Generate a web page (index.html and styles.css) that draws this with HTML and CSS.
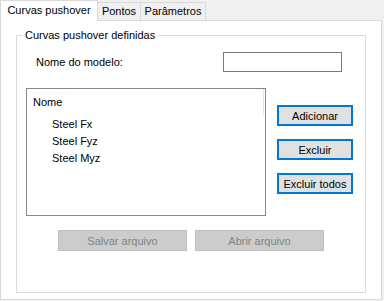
FILE: index.html
```html
<!DOCTYPE html>
<html lang="pt">
<head>
  <meta charset="UTF-8" />
  <title>Curvas pushover</title>
  <link rel="stylesheet" href="styles.css">
</head>
<body>
  <div class="tabs">
    <div class="tab active">Curvas pushover</div>
    <div class="tab tab-pontos">Pontos</div>
    <div class="tab tab-param">Parâmetros</div>
  </div>

  <div class="panel">
    <div class="group">
      <span class="group-title">Curvas pushover definidas</span>

      <div class="name-row">
        <label class="name-label" for="modelName">Nome do modelo:</label>
        <input class="name-input" id="modelName" type="text">
      </div>

      <div class="list-row">
        <div class="list">
          <div class="list-head">Nome</div>
          <ul class="items">
            <li>Steel Fx</li>
            <li>Steel Fyz</li>
            <li>Steel Myz</li>
          </ul>
        </div>
        <div class="side-buttons">
          <button class="btn">Adicionar</button>
          <button class="btn">Excluir</button>
          <button class="btn">Excluir todos</button>
        </div>
      </div>

      <div class="file-row">
        <button class="btn-file" disabled>Salvar arquivo</button>
        <button class="btn-file" disabled>Abrir arquivo</button>
      </div>
    </div>
  </div>
</body>
</html>
```

FILE: styles.css
```css
body {
  margin: 0;
  width: 384px;
  height: 301px;
  background: #f0f0f0;
  font-family: "Liberation Sans", Arial, sans-serif;
  font-size: 11px;
  color: #000;
}

/* abas */
.tabs {
  display: flex;
  align-items: flex-end;
  height: 20px;
}

.tab {
  box-sizing: border-box;
  height: 18px;
  line-height: 17px;
  text-align: center;
  border-top: 1px solid #d9d9d9;
  border-right: 1px solid #d9d9d9;
  background: #f0f0f0;
}

.tab.active {
  position: relative;
  z-index: 1;
  width: 98px;
  height: 21px;
  margin-bottom: -1px;
  line-height: 18px;
  border-left: 1px solid #d9d9d9;
  background: #fff;
}

.tab-pontos {
  width: 43px;
}

.tab-param {
  width: 65px;
}

.panel {
  box-sizing: border-box;
  width: 382px;
  height: 280px;
  padding: 14px 15px 0;
  background: #fff;
  border: 1px solid #d9d9d9;
}

/* grupo */
.group {
  position: relative;
  box-sizing: border-box;
  width: 350px;
  height: 258px;
  border: 1px solid #dcdcdc;
}

.group-title {
  position: absolute;
  top: -8px;
  left: 6px;
  padding: 0 2px;
  background: #fff;
  line-height: 14px;
}

.name-row {
  display: flex;
  align-items: center;
  margin-top: 16px;
  padding: 0 23px 0 19px;
}

.name-label {
  flex: 1;
}

.name-input {
  box-sizing: border-box;
  width: 119px;
  height: 20px;
  margin: 0;
  border: 1px solid #7a7a7a;
  background: #fff;
}

.list-row {
  display: flex;
  margin-top: 16px;
  padding-left: 9px;
}

.list {
  box-sizing: border-box;
  width: 240px;
  height: 128px;
  border: 1px solid #828790;
}

.list-head {
  height: 26px;
  line-height: 26px;
  padding-left: 6px;
  margin-right: 1px;
  border-right: 1px solid #e5e5e5;
}

.items {
  list-style: none;
  margin: 0;
  padding: 0 0 0 25px;
}

.items li {
  height: 17px;
  line-height: 18px;
}

.side-buttons {
  display: flex;
  flex-direction: column;
  gap: 13px;
  margin: 17px 0 0 11px;
}

.btn {
  box-sizing: border-box;
  width: 76px;
  height: 21px;
  padding: 0;
  font: inherit;
  color: #000;
  background: #e1e1e1;
  border: 2px solid #0078d7;
}

.file-row {
  display: flex;
  gap: 8px;
  margin: 14px 0 0 41px;
}

.btn-file {
  box-sizing: border-box;
  width: 129px;
  height: 21px;
  padding: 0;
  font: inherit;
  color: #838383;
  background: #cccccc;
  border: 1px solid #bfbfbf;
}
```
